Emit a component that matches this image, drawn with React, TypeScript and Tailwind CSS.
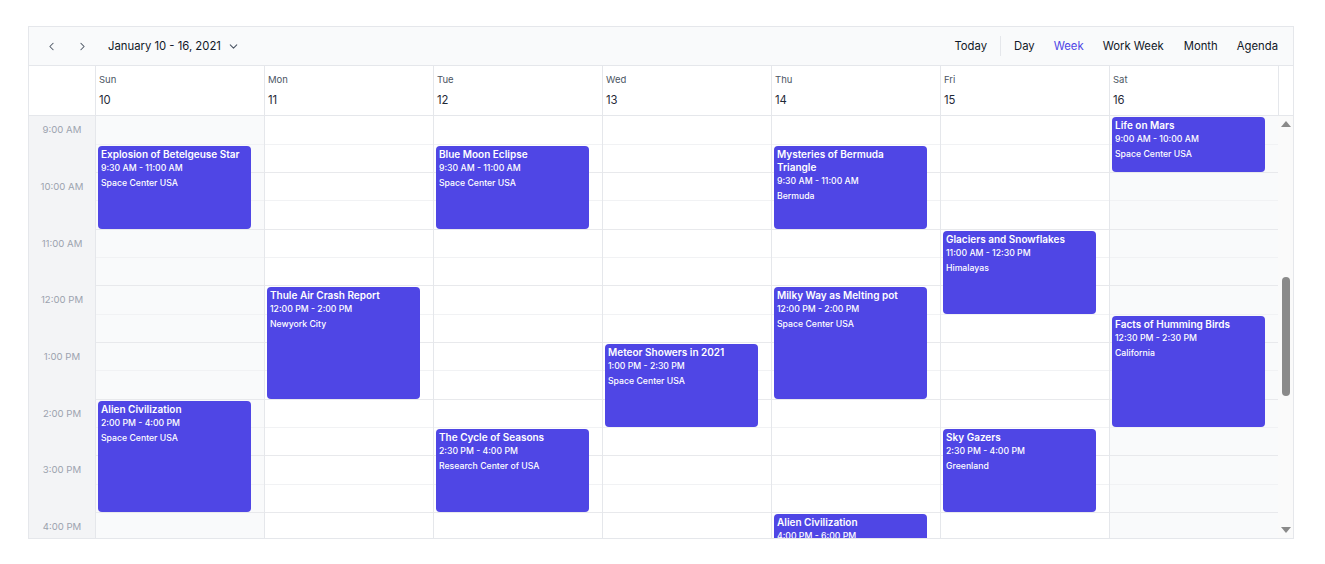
import { useLayoutEffect, useRef } from "react";

const HOUR = 56.7;

const days = [
  { name: "Sun", date: 10, weekend: true },
  { name: "Mon", date: 11 },
  { name: "Tue", date: 12 },
  { name: "Wed", date: 13 },
  { name: "Thu", date: 14 },
  { name: "Fri", date: 15 },
  { name: "Sat", date: 16, weekend: true },
];

interface CalEvent {
  day: number;
  start: number;
  end: number;
  title: string;
  time: string;
  place: string;
}

const events: CalEvent[] = [
  { day: 0, start: 9.5, end: 11, title: "Explosion of Betelgeuse Star", time: "9:30 AM - 11:00 AM", place: "Space Center USA" },
  { day: 0, start: 14, end: 16, title: "Alien Civilization", time: "2:00 PM - 4:00 PM", place: "Space Center USA" },
  { day: 1, start: 12, end: 14, title: "Thule Air Crash Report", time: "12:00 PM - 2:00 PM", place: "Newyork City" },
  { day: 2, start: 9.5, end: 11, title: "Blue Moon Eclipse", time: "9:30 AM - 11:00 AM", place: "Space Center USA" },
  { day: 2, start: 14.5, end: 16, title: "The Cycle of Seasons", time: "2:30 PM - 4:00 PM", place: "Research Center of USA" },
  { day: 3, start: 13, end: 14.5, title: "Meteor Showers in 2021", time: "1:00 PM - 2:30 PM", place: "Space Center USA" },
  { day: 4, start: 9.5, end: 11, title: "Mysteries of Bermuda Triangle", time: "9:30 AM - 11:00 AM", place: "Bermuda" },
  { day: 4, start: 12, end: 14, title: "Milky Way as Melting pot", time: "12:00 PM - 2:00 PM", place: "Space Center USA" },
  { day: 4, start: 16, end: 18, title: "Alien Civilization", time: "4:00 PM - 6:00 PM", place: "Space Center USA" },
  { day: 5, start: 11, end: 12.5, title: "Glaciers and Snowflakes", time: "11:00 AM - 12:30 PM", place: "Himalayas" },
  { day: 5, start: 14.5, end: 16, title: "Sky Gazers", time: "2:30 PM - 4:00 PM", place: "Greenland" },
  { day: 6, start: 9, end: 10, title: "Life on Mars", time: "9:00 AM - 10:00 AM", place: "Space Center USA" },
  { day: 6, start: 12.5, end: 14.5, title: "Facts of Humming Birds", time: "12:30 PM - 2:30 PM", place: "California" },
];

const hours = Array.from({ length: 24 }, (_, i) => i);

const hourLabel = (h: number) => {
  const suffix = h < 12 ? "AM" : "PM";
  const hh = h % 12 === 0 ? 12 : h % 12;
  return `${hh}:00 ${suffix}`;
};

const Chevron = ({ dir }: { dir: "left" | "right" | "down" }) => {
  const d = dir === "left" ? "M10 4 6 8l4 4" : dir === "right" ? "M6 4l4 4-4 4" : "M4 6l4 4 4-4";
  return (
    <svg width="13" height="13" viewBox="0 0 16 16" fill="none" stroke="#4b5563" strokeWidth="1.3" strokeLinecap="round" strokeLinejoin="round">
      <path d={d} />
    </svg>
  );
};

export default function App() {
  const scrollRef = useRef<HTMLDivElement>(null);

  useLayoutEffect(() => {
    if (scrollRef.current) scrollRef.current.scrollTop = 9 * HOUR;
  }, []);

  return (
    <div className="min-h-screen bg-white pl-[28px] pr-[31px] pt-[26px] font-['Inter','Liberation_Sans',sans-serif]">
      <div className="flex h-[513px] flex-col border border-[#e5e7eb]">
        {/* Toolbar */}
        <div className="flex h-[39px] shrink-0 items-center border-b border-[#e5e7eb] bg-[#f9fafb] pl-[10px] pr-[15px]">
          <div className="flex items-center">
            <button className="flex h-[24px] w-[24px] items-center justify-center">
              <Chevron dir="left" />
            </button>
            <button className="ml-[7px] flex h-[24px] w-[24px] items-center justify-center">
              <Chevron dir="right" />
            </button>
            <div className="ml-[14px] flex items-center gap-[6px] text-[11.3px] text-[#111827]">
              <span>January 10 - 16, 2021</span>
              <Chevron dir="down" />
            </div>
          </div>
          <div className="ml-auto flex items-center text-[11.3px] text-[#111827]">
            <span className="pr-[13px]">Today</span>
            <div className="h-[20px] w-px bg-[#e5e7eb]" />
            <span className="pl-[13px]">Day</span>
            <span className="pl-[19px] text-[#4f46e5]">Week</span>
            <span className="pl-[19px]">Work Week</span>
            <span className="pl-[20px]">Month</span>
            <span className="pl-[19px]">Agenda</span>
          </div>
        </div>

        {/* Day header */}
        <div className="flex h-[50px] shrink-0 border-b border-[#e5e7eb]">
          <div className="w-[66px] shrink-0" />
          {days.map((d) => (
            <div key={d.name} className="flex flex-1 flex-col border-l border-[#e5e7eb] pl-[3px] pt-[7px]">
              <span className="text-[9.5px] leading-[14px] text-[#4b5563]">{d.name}</span>
              <span className="mt-[5px] text-[11.3px] leading-[16px] text-[#1f2937]">{d.date}</span>
            </div>
          ))}
          <div className="w-[15px] shrink-0 border-l border-[#e5e7eb]" />
        </div>

        {/* Scrollable grid */}
        <div className="flex min-h-0 flex-1">
          <div ref={scrollRef} className="min-h-0 flex-1 overflow-hidden">
            <div className="flex">
              <div className="w-[66px] shrink-0 bg-[#f3f4f6]">
                {hours.map((h) => (
                  <div key={h} className="h-[56.7px]">
                    <div className="flex h-[28.35px] items-center justify-center text-[9.6px] text-[#9ca3af]">
                      {hourLabel(h)}
                    </div>
                  </div>
                ))}
              </div>
              {days.map((d, di) => (
                <div
                  key={d.name}
                  className={`relative flex-1 border-l border-[#e5e7eb] ${d.weekend ? "bg-[#f9fafb]" : "bg-white"}`}
                >
                  {hours.map((h) => (
                    <div key={h} className="h-[56.7px] border-b border-[#e8e9ec]">
                      <div className="h-[28.35px] border-b border-[#f1f2f4]" />
                    </div>
                  ))}
                  {events
                    .filter((e) => e.day === di)
                    .map((e) => (
                      <div
                        key={e.title + e.start}
                        className="absolute left-[2px] right-[13px] overflow-hidden rounded-[4px] bg-[#4f46e5] px-[3px] pt-[2px] text-white"
                        style={{ top: e.start * HOUR + 1, height: (e.end - e.start) * HOUR - 2 }}
                      >
                        <div className="text-[10px] font-semibold leading-[13px]">{e.title}</div>
                        <div className="mt-[1px] text-[8.7px] font-medium leading-[13px]">{e.time}</div>
                        <div className="mt-[2px] text-[8.7px] font-medium leading-[13px]">{e.place}</div>
                      </div>
                    ))}
                </div>
              ))}
            </div>
          </div>

          {/* Scrollbar */}
          <div className="flex w-[15px] shrink-0 flex-col items-center bg-[#fafafa] py-[5px]">
            <div className="h-0 w-0 border-x-[5px] border-b-[6px] border-x-transparent border-b-[#8a8a8a]" />
            <div className="flex w-full flex-1 flex-col items-center pt-[150px]">
              <div className="h-[119px] w-[8px] rounded-full bg-[#8a8a8a]" />
            </div>
            <div className="h-0 w-0 border-x-[5px] border-t-[6px] border-x-transparent border-t-[#8a8a8a]" />
          </div>
        </div>
      </div>
    </div>
  );
}
